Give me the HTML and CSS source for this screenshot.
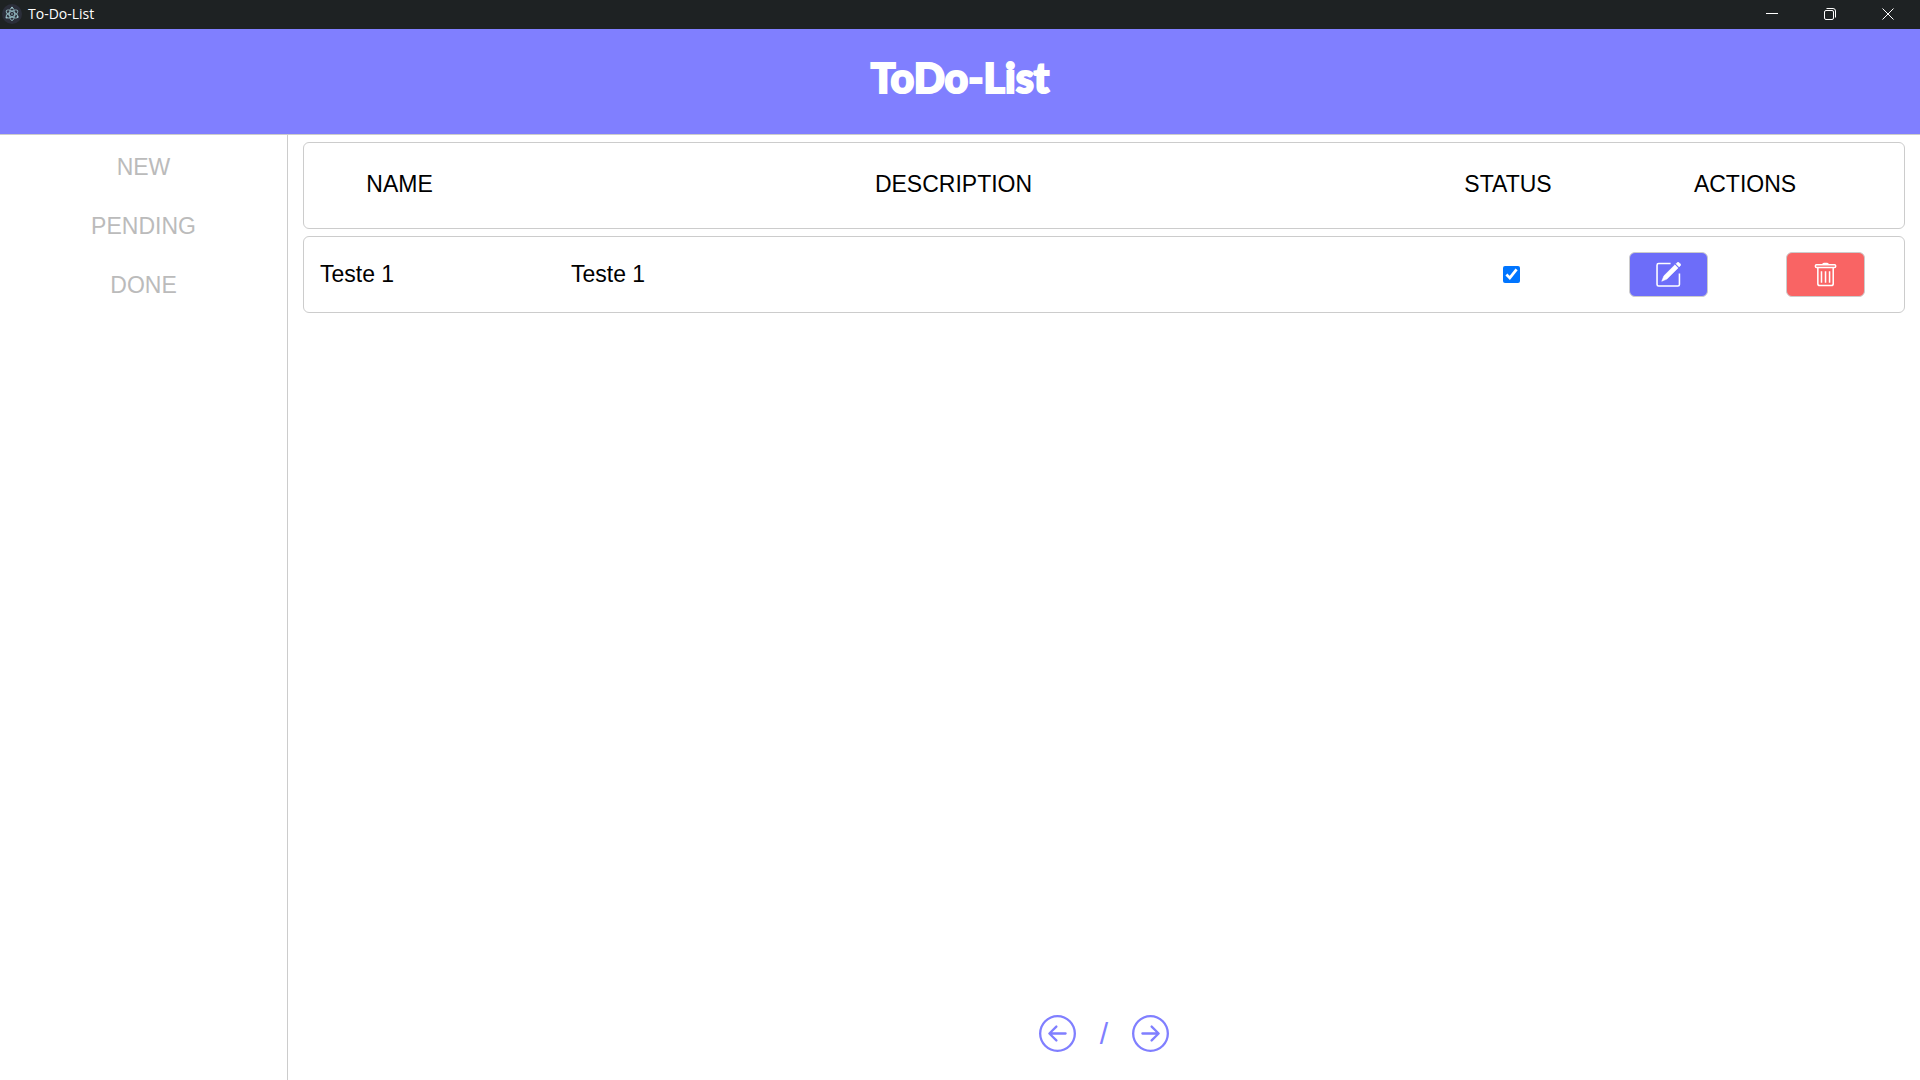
FILE: index.html
```html
<!DOCTYPE html>
<html lang="en">
<head>
<meta charset="utf-8">
<title>To-Do-List</title>
<meta name="viewport" content="width=device-width, initial-scale=1">
<link rel="stylesheet" href="styles.css">
</head>
<body>
<div class="titlebar">
  <svg class="app-icon" viewBox="0 0 20 20" aria-hidden="true">
    <circle cx="10" cy="10" r="10" fill="#2b2e3a"/>
    <g fill="none" stroke="#8fb3bb" stroke-width=".9">
      <ellipse cx="10" cy="10" rx="6.5" ry="2.6" transform="rotate(30 10 10)"/>
      <ellipse cx="10" cy="10" rx="6.5" ry="2.6" transform="rotate(-30 10 10)"/>
      <ellipse cx="10" cy="10" rx="6.5" ry="2.6" transform="rotate(90 10 10)"/>
    </g>
    <g fill="#9fc3cb"><circle cx="10" cy="10" r=".8"/><circle cx="10" cy="3.8" r="1"/><circle cx="4.5" cy="13.5" r="1"/><circle cx="15.6" cy="13" r="1"/></g>
  </svg>
  <span class="titlebar-text">To-Do-List</span>
  <div class="window-controls">
    <button type="button" aria-label="Minimize"><svg viewBox="0 0 12 12"><path d="M0 5.500h12"/></svg></button>
    <button type="button" aria-label="Restore"><svg viewBox="0 0 12 12"><rect x=".5" y="2.5" width="9" height="9" rx="1.5"/><path d="M2.500 .5H9a2.500 2.500 0 0 1 2.500 2.500v6.500"/></svg></button>
    <button type="button" aria-label="Close"><svg viewBox="0 0 12 12"><path d="M.5 .5l11 11M11.500 .5l-11 11"/></svg></button>
  </div>
</div>
<header class="header"><h1>ToDo-List</h1></header>
<div class="layout">
  <nav class="sidebar">
    <a href="#new">NEW</a>
    <a href="#pending">PENDING</a>
    <a href="#done">DONE</a>
  </nav>
  <main class="content">
    <table class="tasks">
      <thead>
        <tr class="card head-row">
          <th scope="col">NAME</th>
          <th scope="col">DESCRIPTION</th>
          <th scope="col">STATUS</th>
          <th scope="col">ACTIONS</th>
        </tr>
      </thead>
      <tbody>
        <tr class="card task-row">
          <td>Teste 1</td>
          <td>Teste 1</td>
          <td class="center"><input type="checkbox" aria-label="Done" checked></td>
          <td class="center">
            <button type="button" class="action edit" aria-label="Edit">
              <svg viewBox="0 0 24 24"><path d="M14 1.500H2.500a1.500 1.500 0 0 0-1.500 1.500v18.500A1.500 1.500 0 0 0 2.500 23h18.500a1.500 1.500 0 0 0 1.500-1.500V11" fill="none" stroke="#fff" stroke-width="1.5"/><path d="M18.200 2.700l3 3L10.500 16.400 5.500 18.500l2.100-5.200z M19.200 1.700l1.300-1.300a1 1 0 0 1 1.400 0l1.600 1.600a1 1 0 0 1 0 1.400l-1.300 1.300z" fill="#fff" stroke="#fff" stroke-width=".5"/></svg>
            </button>
          </td>
          <td class="center">
            <button type="button" class="action delete" aria-label="Delete">
              <svg viewBox="0 0 24 26"><g fill="none" stroke="#fff" stroke-width="1.6"><rect x="1.5" y="2.8" width="21" height="3" rx="1"/><path d="M4 6v16.500a2 2 0 0 0 2 2h12a2 2 0 0 0 2-2V6M7.800 9.500v12M12 9.500v12M16.200 9.500v12"/></g><path d="M8.500 2.500q0-1.800 1.800-1.800h3.400q1.800 0 1.800 1.800z" fill="#fff"/></svg>
            </button>
          </td>
        </tr>
      </tbody>
    </table>
    <div class="pagination">
      <button type="button" aria-label="Previous page"><svg viewBox="0 0 16 16" fill="currentColor"><path fill-rule="evenodd" d="M1 8a7 7 0 1 0 14 0A7 7 0 0 0 1 8m15 0A8 8 0 1 1 0 8a8 8 0 0 1 16 0m-4.500-.5a.5.5 0 0 1 0 1H5.707l2.147 2.146a.5.5 0 0 1-.708.708l-3-3a.5.5 0 0 1 0-.708l3-3a.5.5 0 1 1 .708.708L5.707 7.500z"/></svg></button>
      <span>/</span>
      <button type="button" aria-label="Next page"><svg viewBox="0 0 16 16" fill="currentColor"><path fill-rule="evenodd" d="M1 8a7 7 0 1 0 14 0A7 7 0 0 0 1 8m15 0A8 8 0 1 1 0 8a8 8 0 0 1 16 0M4.500 7.500a.5.5 0 0 0 0 1h5.793l-2.147 2.146a.5.5 0 0 0 .708.708l3-3a.5.5 0 0 0 0-.708l-3-3a.5.5 0 1 0-.708.708L10.293 7.500z"/></svg></button>
    </div>
  </main>
</div>
</body>
</html>
```
FILE: styles.css
```css
* {
  box-sizing: border-box;
}

body {
  margin: 0;
  min-height: 100vh;
  display: flex;
  flex-direction: column;
  font-family: "Liberation Sans", Arial, sans-serif;
  font-size: 23px;
  line-height: 27px;
  color: #000;
  background: #fff;
}

button {
  display: flex;
  align-items: center;
  justify-content: center;
  padding: 0;
  border: 0;
  background: none;
  cursor: pointer;
}

.titlebar {
  display: flex;
  align-items: center;
  height: 29px;
  padding: 0 3px 1px 2px;
  background: #1e2223;
  color: #fff;
}

.app-icon {
  width: 20px;
  height: 20px;
}

.titlebar-text {
  margin-left: 6px;
  font-family: "Open Sans", "Noto Sans", sans-serif;
  font-size: 14px;
  line-height: 20px;
}

.window-controls {
  display: flex;
  height: 100%;
  margin-left: auto;
}

.window-controls button {
  width: 58px;
}

.window-controls svg {
  width: 12px;
  height: 12px;
  fill: none;
  stroke: #fff;
}

.header {
  display: flex;
  justify-content: center;
  height: 106px;
  padding-top: 24px;
  border-bottom: 1px solid #ccc;
  background: #807fff;
}

.header h1 {
  margin: 0;
  font-family: Lato, sans-serif;
  font-size: 41px;
  font-weight: 900;
  line-height: 50px;
  color: #fff;
  -webkit-text-stroke: 2px #fff;
}

.layout {
  flex: 1;
  display: flex;
}

.sidebar {
  width: 15%;
  padding-top: 3px;
  border-right: 1px solid #ccc;
}

.sidebar a {
  display: block;
  padding: 16px 0;
  text-align: center;
  text-decoration: none;
  color: #bbb;
}

.content {
  flex: 1;
  display: flex;
  flex-direction: column;
  padding: 7px 15px 28px;
}

.tasks,
.tasks thead,
.tasks tbody {
  display: block;
}

.card {
  display: grid;
  align-items: center;
  margin-bottom: 7px;
  border: 1px solid #ccc;
  border-radius: 6px;
}

.head-row {
  grid-template-columns: 191fr 917fr 192fr 282fr;
  padding: 28px 18px 30px 0;
}

.head-row th {
  padding: 0;
  font-weight: normal;
}

.task-row {
  grid-template-columns: 8fr 28fr 5fr 5fr 5fr;
  padding: 15px 0;
}

.task-row td {
  padding: 0 16px;
}

.task-row .center {
  display: flex;
  justify-content: center;
  padding: 0;
}

.task-row input {
  width: 17px;
  height: 17px;
  margin: 0;
  accent-color: #0075ff;
}

.action {
  width: 50%;
  height: 45px;
  border: 1px solid #ccc;
  border-radius: 6px;
}

.edit {
  background: #6d6df9;
}

.delete {
  background: #f96464;
}

.action svg {
  height: 25px;
}

.pagination {
  display: flex;
  align-items: center;
  justify-content: center;
  gap: 24px;
  margin-top: auto;
  font-size: 30px;
  line-height: 37px;
  color: #807fff;
}

.pagination button {
  color: inherit;
}

.pagination svg {
  width: 37px;
  height: 37px;
}
```
